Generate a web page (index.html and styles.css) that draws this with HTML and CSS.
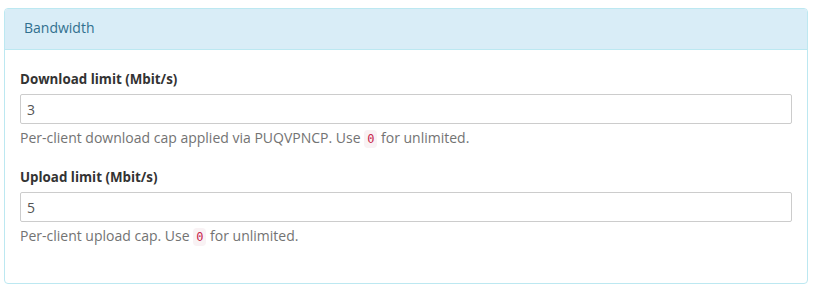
FILE: index.html
```html
<!DOCTYPE html>
<html lang="en">
<head>
    <meta charset="UTF-8">
    <meta name="viewport" content="width=device-width, initial-scale=1.0">
    <title>Bandwidth</title>
    <link rel="stylesheet" href="styles.css">
</head>
<body>
    <div class="panel">
        <div class="panel-heading">Bandwidth</div>
        <div class="panel-body">
            <div class="form-group">
                <label for="download">Download limit (Mbit/s)</label>
                <input type="text" id="download" value="3">
                <p class="help">Per-client download cap applied via PUQVPNCP. Use <code>0</code> for unlimited.</p>
            </div>
            <div class="form-group">
                <label for="upload">Upload limit (Mbit/s)</label>
                <input type="text" id="upload" value="5">
                <p class="help">Per-client upload cap. Use <code>0</code> for unlimited.</p>
            </div>
        </div>
    </div>
</body>
</html>
```

FILE: styles.css
```css
body {
    font-family: 'Open Sans', sans-serif;
    font-size: 14px;
    line-height: 20px;
    color: #333;
    background: #fff;
    margin: 0;
    padding: 8px 12px 0 4px;
}

.panel {
    border: 1px solid #bce8f1;
    border-radius: 4px;
    background: #fff;
}

.panel-heading {
    background: #d9edf7;
    color: #31708f;
    padding: 9px 19px 11px;
    border-bottom: 1px solid #bce8f1;
    border-radius: 3px 3px 0 0;
}

.panel-body {
    padding: 19px 15px 36px;
}

.form-group + .form-group {
    margin-top: 18px;
}

label {
    display: block;
    font-size: 13.35px;
    font-weight: 700;
    margin-bottom: 5px;
}

/* Text inputs */
input {
    display: block;
    box-sizing: border-box;
    width: 100%;
    height: 30px;
    padding: 4px 6px;
    border: 1px solid #ccc;
    border-radius: 2px;
    font-family: inherit;
    font-size: 14px;
    color: #555;
    outline: none;
}

.help {
    margin: 4px 0 0;
    color: #737373;
}

code {
    font-family: 'DejaVu Sans Mono', monospace;
    font-size: 12px;
    padding: 2px 3px;
    color: #c7254e;
    background: #f9f2f4;
    border-radius: 4px;
}
```
